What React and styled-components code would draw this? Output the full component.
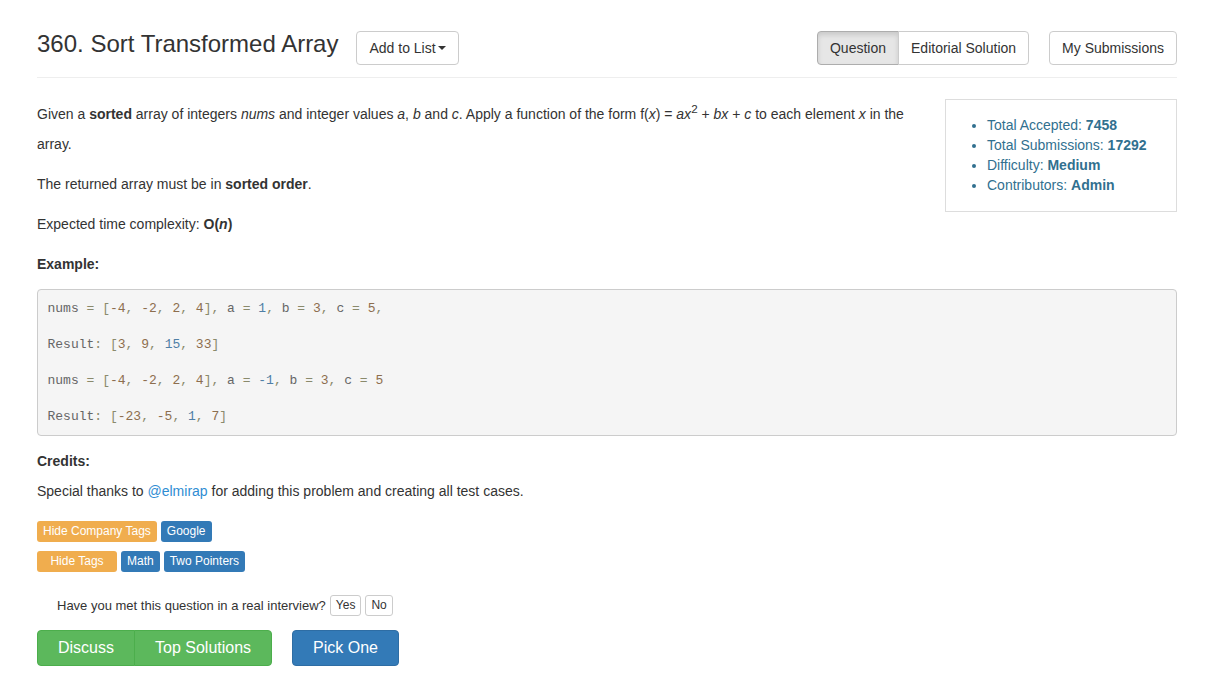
import React from "react";
import styled, { createGlobalStyle } from "styled-components";

const Global = createGlobalStyle`
  html, body { margin: 0; padding: 0; background: #fff; }
  body {
    font-family: "Liberation Sans", Arial, Helvetica, sans-serif;
    font-size: 14px;
    color: #333;
  }
  * { box-sizing: border-box; }
`;

const Page = styled.div`
  width: 1140px;
  margin-left: 37px;
`;

const Header = styled.header`
  display: flex;
  align-items: flex-start;
  padding-top: 31px;
  padding-bottom: 12px;
  border-bottom: 1px solid #eee;
`;

const Title = styled.h3`
  margin: 0;
  font-size: 24px;
  font-weight: 500;
  line-height: 26.4px;
  color: #333;
`;

const Btn = styled.button`
  display: inline-flex;
  align-items: center;
  height: 34px;
  padding: 6px 12px;
  font-family: inherit;
  font-size: 14px;
  line-height: 20px;
  color: #333;
  background: ${(p) => (p.$active ? "#e6e6e6" : "#fff")};
  border: 1px solid ${(p) => (p.$active ? "#adadad" : "#ccc")};
  border-radius: 4px;
  box-shadow: ${(p) => (p.$active ? "inset 0 3px 5px rgba(0,0,0,.125)" : "none")};
  cursor: pointer;
`;

const AddBtn = styled(Btn)`
  margin-left: 18px;
`;

const Caret = styled.span`
  display: inline-block;
  width: 0;
  height: 0;
  margin-left: 2px;
  border-top: 4px solid #333;
  border-left: 4px solid transparent;
  border-right: 4px solid transparent;
`;

const Spacer = styled.div`
  flex: 1;
`;

const Group = styled.div`
  display: flex;
  margin-right: 20px;
  & > button:first-child { border-top-right-radius: 0; border-bottom-right-radius: 0; }
  & > button:last-child { border-top-left-radius: 0; border-bottom-left-radius: 0; margin-left: -1px; }
`;

const Body = styled.div`
  margin-top: 21px;
`;

const StatsBox = styled.div`
  float: right;
  width: 232px;
  margin-left: 20px;
  border: 1px solid #ddd;
  padding: 15px 0 16px;
`;

const StatsList = styled.ul`
  margin: 0;
  padding-left: 41px;
  color: #31708f;
  line-height: 20px;
  font-size: 14px;
`;

const P = styled.p`
  margin: 0 0 ${(p) => (p.$mb != null ? p.$mb : 10)}px;
  line-height: 30px;
`;

const Pre = styled.pre`
  margin: 0 0 10px;
  padding: 9.5px;
  background: #f5f5f5;
  border: 1px solid #ccc;
  border-radius: 4px;
  font-family: "Liberation Mono", "Courier New", monospace;
  font-size: 13px;
  line-height: 18px;
  color: #666;
  white-space: pre;
`;

const Lit = styled.span`
  color: ${(p) => (p.$c === "b" ? "#4f7fa6" : "#8d6e4e")};
`;

const Pun = styled.span`
  color: #8a8a6c;
`;

const Sup = styled.sup`
  line-height: 0;
`;

const Link = styled.a`
  color: #2f8dd3;
  text-decoration: none;
`;

const TagRows = styled.div`
  display: flex;
  flex-direction: column;
  gap: 9px;
  margin-top: 15px;
`;

const TagRow = styled.div`
  display: flex;
  gap: 4px;
`;

const Tag = styled.span`
  display: inline-block;
  min-width: ${(p) => p.$min || 0}px;
  text-align: center;
  padding: 2px 6px;
  font-size: 12px;
  line-height: 17px;
  color: #fff;
  border-radius: 3px;
  background: ${(p) => (p.$warn ? "#f0ad4e" : "#337ab7")};
`;

const Interview = styled.div`
  display: flex;
  align-items: center;
  gap: 4px;
  margin-top: 23px;
  padding-left: 20px;
  font-size: 13px;
`;

const XsBtn = styled.button`
  height: 21px;
  padding: 1px 5px;
  font-family: inherit;
  font-size: 12px;
  line-height: 17px;
  color: #333;
  background: #fff;
  border: 1px solid #ccc;
  border-radius: 3px;
`;

const Actions = styled.div`
  display: flex;
  gap: 20px;
  margin-top: 14px;
`;

const BigGroup = styled.div`
  display: flex;
  & > button:first-child { border-top-right-radius: 0; border-bottom-right-radius: 0; }
  & > button:last-child { border-top-left-radius: 0; border-bottom-left-radius: 0; margin-left: -1px; }
`;

const BigBtn = styled.button`
  height: 36px;
  padding: 6px 20px;
  font-family: inherit;
  font-size: 16px;
  line-height: 22px;
  color: #fff;
  background: ${(p) => (p.$green ? "#5cb85c" : "#337ab7")};
  border: 1px solid ${(p) => (p.$green ? "#4cae4c" : "#2e6da4")};
  border-radius: 4px;
`;

export default function App() {
  return (
    <>
      <Global />
      <Page>
        <Header>
          <Title>360. Sort Transformed Array</Title>
          <AddBtn>
            Add to List<Caret />
          </AddBtn>
          <Spacer />
          <Group>
            <Btn $active>Question</Btn>
            <Btn>Editorial Solution</Btn>
          </Group>
          <Btn>My Submissions</Btn>
        </Header>
        <Body>
          <StatsBox>
            <StatsList>
              <li>Total Accepted: <b>7458</b></li>
              <li>Total Submissions: <b>17292</b></li>
              <li>Difficulty: <b>Medium</b></li>
              <li>Contributors: <b>Admin</b></li>
            </StatsList>
          </StatsBox>
          <P>
            Given a <b>sorted</b> array of integers <i>nums</i> and integer values <i>a</i>,{" "}
            <i>b</i> and <i>c</i>. Apply a function of the form f(<i>x</i>) = <i>ax</i>
            <Sup>2</Sup> + <i>bx</i> + <i>c</i> to each element{" "}
            <i>x</i> in the array.
          </P>
          <P>
            The returned array must be in <b>sorted order</b>.
          </P>
          <P>
            Expected time complexity: <b>O(<i>n</i>)</b>
          </P>
          <P>
            <b>Example:</b>
          </P>
          <Pre>
            nums <Pun>=</Pun> <Pun>[</Pun><Lit>-4</Lit><Pun>,</Pun> <Lit>-2</Lit><Pun>,</Pun> <Lit>2</Lit><Pun>,</Pun> <Lit>4</Lit><Pun>],</Pun> a <Pun>=</Pun> <Lit $c="b">1</Lit><Pun>,</Pun> b <Pun>=</Pun> <Lit>3</Lit><Pun>,</Pun> c <Pun>=</Pun> <Lit>5</Lit><Pun>,</Pun>
            {"\n\n"}Result<Pun>:</Pun> <Pun>[</Pun><Lit>3</Lit><Pun>,</Pun> <Lit>9</Lit><Pun>,</Pun> <Lit $c="b">15</Lit><Pun>,</Pun> <Lit>33</Lit><Pun>]</Pun>
            {"\n\n"}nums <Pun>=</Pun> <Pun>[</Pun><Lit>-4</Lit><Pun>,</Pun> <Lit>-2</Lit><Pun>,</Pun> <Lit>2</Lit><Pun>,</Pun> <Lit>4</Lit><Pun>],</Pun> a <Pun>=</Pun> <Lit $c="b">-1</Lit><Pun>,</Pun> b <Pun>=</Pun> <Lit>3</Lit><Pun>,</Pun> c <Pun>=</Pun> <Lit>5</Lit>
            {"\n\n"}Result<Pun>:</Pun> <Pun>[</Pun><Lit>-23</Lit><Pun>,</Pun> <Lit>-5</Lit><Pun>,</Pun> <Lit $c="b">1</Lit><Pun>,</Pun> <Lit>7</Lit><Pun>]</Pun>
          </Pre>
          <P $mb={0}>
            <b>Credits:</b>
          </P>
          <P $mb={0}>
            Special thanks to <Link href="#">@elmirap</Link> for adding this problem and creating all test cases.
          </P>
          <TagRows>
            <TagRow>
              <Tag $warn>Hide Company Tags</Tag>
              <Tag>Google</Tag>
            </TagRow>
            <TagRow>
              <Tag $warn $min={80}>Hide Tags</Tag>
              <Tag>Math</Tag>
              <Tag>Two Pointers</Tag>
            </TagRow>
          </TagRows>
          <Interview>
            <span>Have you met this question in a real interview?</span>
            <XsBtn>Yes</XsBtn>
            <XsBtn>No</XsBtn>
          </Interview>
          <Actions>
            <BigGroup>
              <BigBtn $green>Discuss</BigBtn>
              <BigBtn $green>Top Solutions</BigBtn>
            </BigGroup>
            <BigBtn>Pick One</BigBtn>
          </Actions>
        </Body>
      </Page>
    </>
  );
}
